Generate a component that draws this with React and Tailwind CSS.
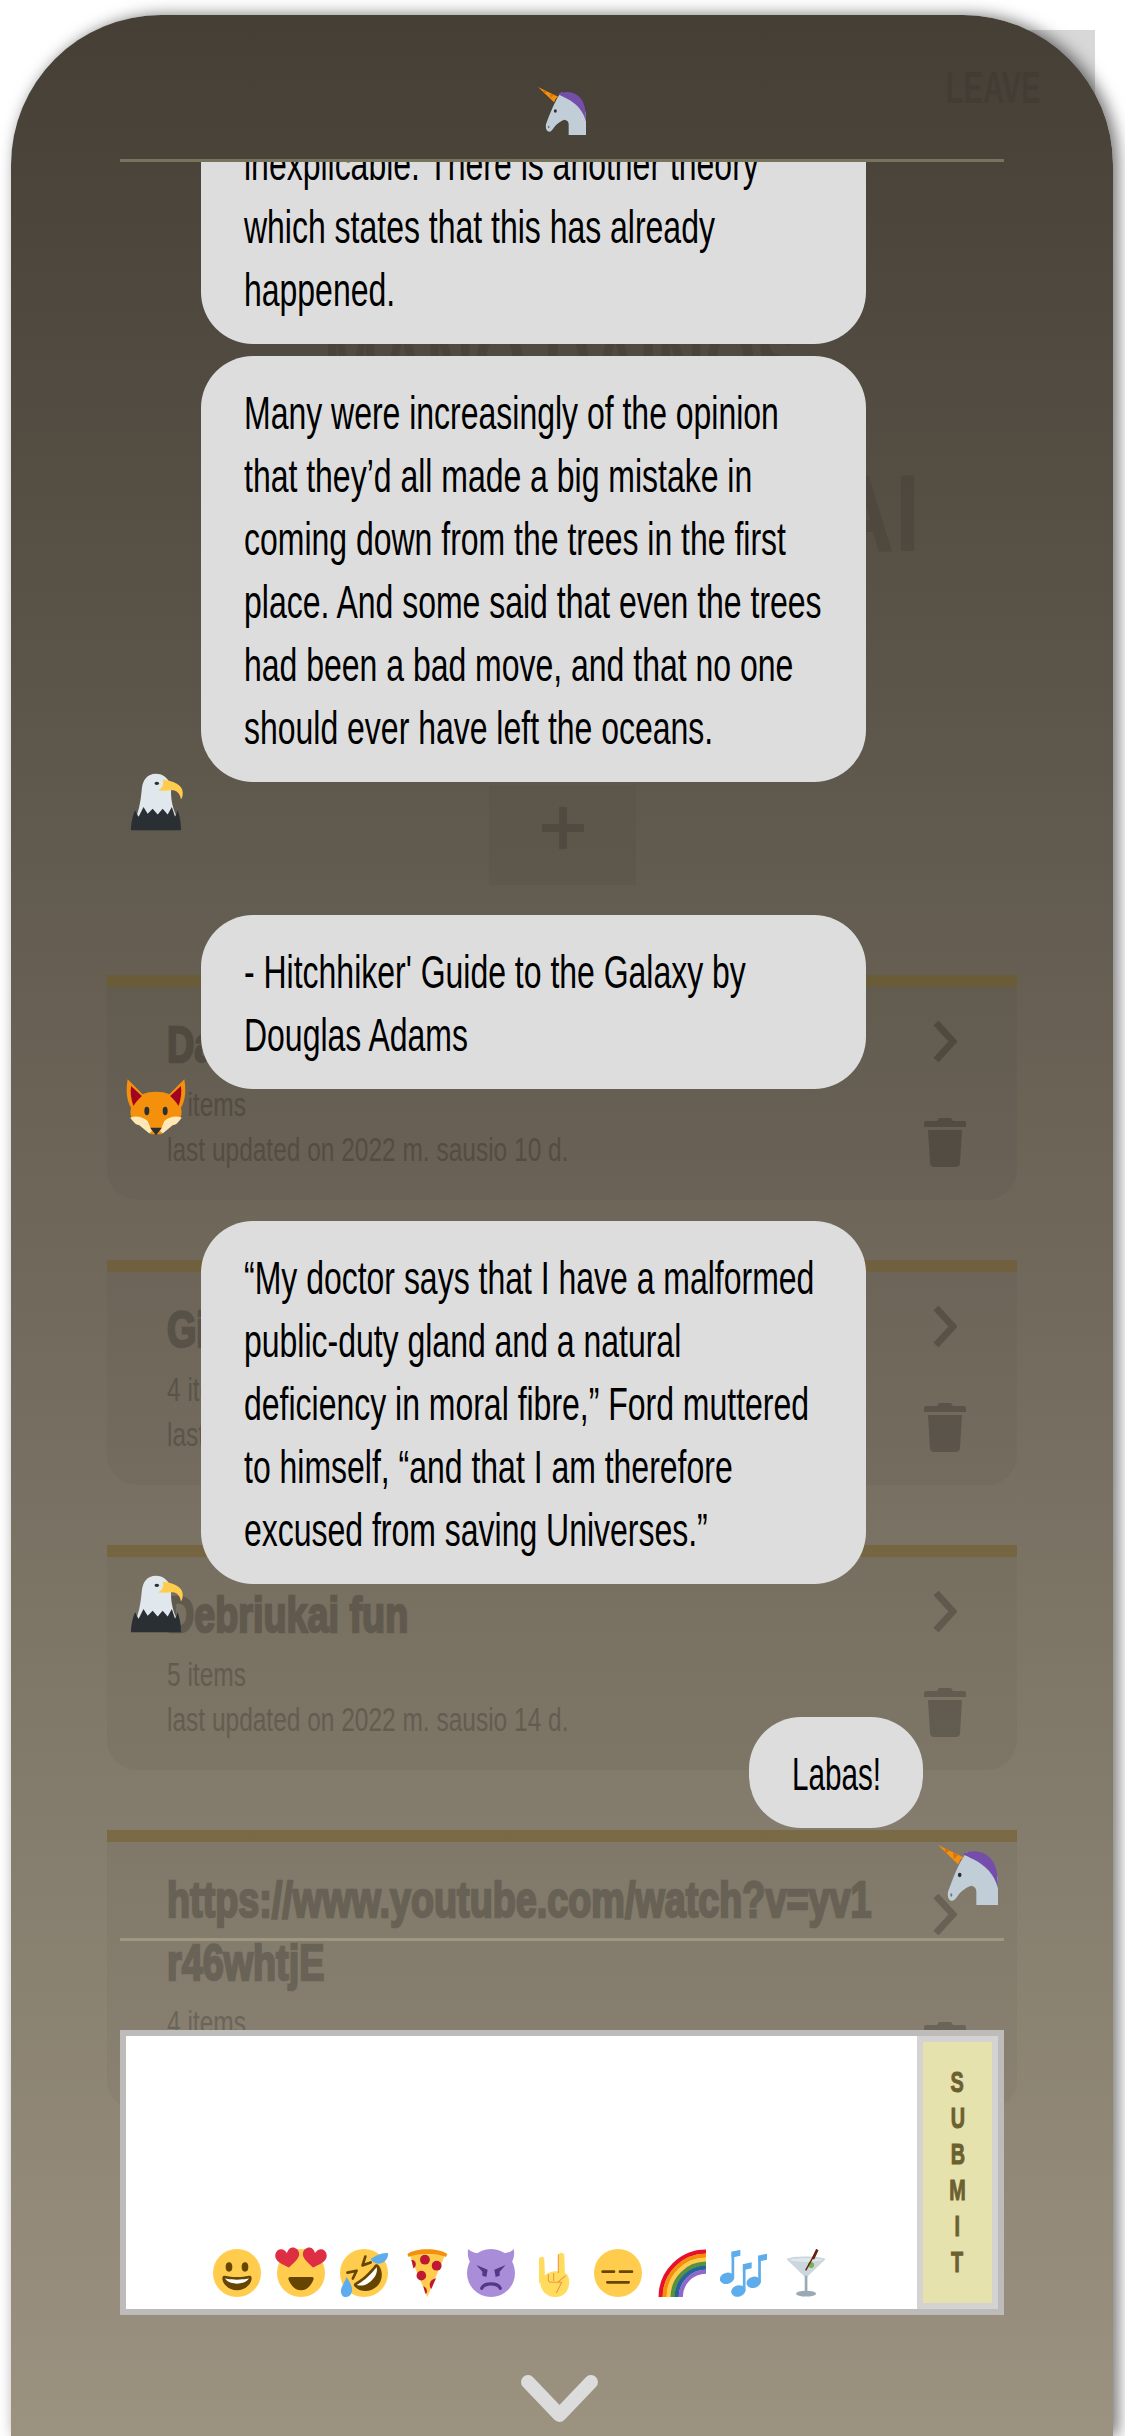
import React from "react";

const Bubble = ({ lines, className, lineClass = "scale-x-[.695]" }) => (
  <div className={`shrink-0 rounded-[52px] bg-[#dddddd] pb-[22px] pt-[26px] text-[46px] leading-[63px] text-black ${className}`}>
    {lines.map((l) => (
      <span key={l} className={`block origin-left whitespace-nowrap ${lineClass}`}>{l}</span>
    ))}
  </div>
);

const Unicorn = ({ className }) => (
  <svg viewBox="0 0 36 36" className={className}>
    <path d="M16 6 C12 12 9 20 6 28 C5.500 31 6.500 33.500 8.500 33.500 C10 33.500 11.500 31 13 29 C15 27 18 25 20 24.500 C22 25 23 26 23 28 V36 H36 V20 C34 12 27 6 20 6.500 L17.500 4 Z" fill="#C1CED7" />
    <path d="M15 5.500 C20 2.500 27 3.500 31 7.500 C35 11.500 36 17 36 26 C34.500 20 31.500 16 28 13 C24 9.500 19 7.500 15 5.500 Z" fill="#744EAA" />
    <path d="M0 0 L15.500 7.500 L13.500 8.500 L12 11.500 Z" fill="#F4900C" />
    <path d="M4 2 L7 3.500 L4.500 5 Z M9 4.500 L12 6 L9.500 8.500 Z" fill="#D9700A" />
    <ellipse cx="13" cy="18" rx="1.100" ry="1.300" fill="#292F33" />
    <ellipse cx="8" cy="30" rx=".6" ry="1" fill="#66757F" />
  </svg>
);

const Eagle = ({ className }) => (
  <svg viewBox="0 0 36 36" className={className}>
    <path d="M18 1 C12.500 1 10 5 9.500 10 C9 15 8.500 20 6.500 26 L14 31 H26 L30 26 C27.500 20 27 16 27 11 L26 6 C24.500 3 21.500 1 18 1 Z" fill="#E1E8ED" />
    <path d="M3 35 C3 31 4 26 5.500 23 L7.500 27 L10.500 21 L13 25 L16 22 L19 25.500 L22 22 L25 25.500 L27.500 21 L29.500 27 L31 23 C32.500 27 33 31 33 35 Z" fill="#292F33" />
    <path d="M22 4.500 C26 5 32 6.500 33.500 10 C34.500 12.500 34 15 33 16.500 C32.500 13.500 31 11.500 28.500 11 C25.500 10.800 22 11.500 19 11 C21.500 10 23 8 22 4.500 Z" fill="#FFCC4D" />
    <ellipse cx="18.500" cy="6.800" rx="1.400" ry="1" fill="#292F33" />
  </svg>
);

const Fox = ({ className }) => (
  <svg viewBox="0 0 36 36" className={className}>
    <path d="M1 2 L10 11 C12 10 15 9.500 18 9.500 C21 9.500 24 10 26 11 L35 2 C36 8 36 14 33 19 C34 23 33 27 28 29 L21 35 H15 L8 29 C3 27 2 23 3 19 C0 14 0 8 1 2 Z" fill="#F4900C" />
    <path d="M3 6 L9.500 12 C7.500 14 5.500 16 4.500 18 C3 14 2.500 10 3 6 Z M33 6 L26.500 12 C28.500 14 30.500 16 31.500 18 C33 14 33.500 10 33 6 Z" fill="#A0041E" />
    <path d="M2.500 25 C6 23.500 10 24.500 13 27 L15.500 33 L14 34.500 L8 29.500 L6 29 L4.500 27.500 Z M33.500 25 C30 23.500 26 24.500 23 27 L20.500 33 L22 34.500 L28 29.500 L30 29 L31.500 27.500 Z" fill="#FFE8B6" />
    <path d="M14.500 31 H21.500 L18 35.500 Z" fill="#292F33" />
    <ellipse cx="12.500" cy="21" rx="1.500" ry="2.500" fill="#292F33" />
    <ellipse cx="23.500" cy="21" rx="1.500" ry="2.500" fill="#292F33" />
  </svg>
);

const Grin = () => (
  <svg viewBox="0 0 36 36" className="h-12 w-12 shrink-0">
    <circle cx="18" cy="18" r="18" fill="#FFCC4D" />
    <path d="M18 21c-3.600 0-6-.4-9-1-.7-.1-2 0-2 2 0 4 4.600 9 11 9s11-5 11-9c0-2-1.300-2.100-2-2-3 .6-5.400 1-9 1z" fill="#664500" />
    <path d="M9 22s3 1 9 1 9-1 9-1-2 4-9 4-9-4-9-4z" fill="#fff" />
    <ellipse cx="12" cy="13.500" rx="2.500" ry="3.500" fill="#664500" />
    <ellipse cx="24" cy="13.500" rx="2.500" ry="3.500" fill="#664500" />
  </svg>
);

const heart = "M9 15 C5 12 0 9.500 0 5.500 C0 2.500 2.300 .5 4.500 .5 C6.500 .5 8 2 9 4 C10 2 11.500 .5 13.500 .5 C15.700 .5 18 2.500 18 5.500 C18 9.500 13 12 9 15 Z";

const HeartEyes = () => (
  <svg viewBox="0 0 36 36" className="h-12 w-12 shrink-0 overflow-visible">
    <circle cx="18" cy="18" r="18" fill="#FFCC4D" />
    <path d="M10 21 H26 C27 21 27.700 21.700 27.400 22.700 C26 27 22.500 31 18 31 S10 27 8.600 22.700 C8.300 21.700 9 21 10 21 Z" fill="#664500" />
    <g fill="#DD2E44">
      <path d={heart} transform="translate(-1 -1) rotate(-8 9 8)" />
      <path d={heart} transform="translate(19 -1) rotate(8 9 8)" />
    </g>
  </svg>
);

const Rofl = () => (
  <svg viewBox="0 0 36 36" className="h-12 w-12 shrink-0 overflow-visible">
    <circle cx="18" cy="18" r="18" fill="#FFCC4D" />
    <g transform="rotate(-42 18 18)">
      <path d="M18 20c-4 0-7-.4-10-1-.7-.1-2 0-2 2 0 5 5 11 12 11s12-6 12-11c0-2-1.300-2.100-2-2-3 .6-6 1-10 1z" fill="#664500" />
      <path d="M8 21s3 1 10 1 10-1 10-1-2 5-10 5-10-5-10-5z" fill="#fff" />
      <path d="M9 9.500 L15 13 L9 15.500 M27 9.500 L21 13 L27 15.500" fill="none" stroke="#664500" strokeWidth="2" strokeLinecap="round" strokeLinejoin="round" />
    </g>
    <path d="M36 3c.5 3-2 8-7 8-3 0-5-1.500-6-3.500C26 5.500 31 2.500 36 3z" fill="#5DADEC" />
    <path d="M4.500 36c-3 0-4.500-3-3.500-6.500C2 26.500 4 24 5 21c1.500 2.500 3.500 5.500 4 8.500.5 3.500-1.500 6.500-4.500 6.500z" fill="#5DADEC" />
  </svg>
);

const Pizza = () => (
  <svg viewBox="0 0 36 36" className="h-12 w-12 shrink-0">
    <path d="M4 4 H31 L17.500 36 Z" fill="#FFCC4D" />
    <path d="M2.500 4 C8 -1 27 -1 32.500 4 L31.500 6 C26 3 9 3 3.500 6 Z" fill="#F4900C" />
    <g fill="#BE1931">
      <circle cx="15.700" cy="8" r="3.700" />
      <circle cx="24.500" cy="12.500" r="3.700" />
      <path d="M5.500 8 C8.500 8 9.500 11 8.500 13 C7.500 14.500 7 14.500 7 14.500 Z" />
      <circle cx="13" cy="20" r="3.600" />
      <path d="M24 22 L20.500 30 C18.500 28 18.500 23 24 22 Z" />
      <path d="M14.500 28 C17 29 17.500 31 17 33 L16 33.500 Z" />
    </g>
  </svg>
);

const Imp = () => (
  <svg viewBox="0 0 36 36" className="h-12 w-12 shrink-0">
    <path d="M1 0 C0 4 1 8 3 11 L11 3 C7 3.500 3 2.500 1 0 Z M35 0 C36 4 35 8 33 11 L25 3 C29 3.500 33 2.500 35 0 Z" fill="#AA8DD8" />
    <circle cx="18" cy="18" r="18" fill="#AA8DD8" />
    <path d="M7 12 L15.500 15.500 L14.500 21 L11.500 20 L11.500 17 Z M29 12 L20.500 15.500 L21.500 21 L24.500 20 L24.500 17 Z" fill="#553788" />
    <path d="M11 29.500 C13 25 23 25 25 29.500" fill="none" stroke="#553788" strokeWidth="2.400" strokeLinecap="round" />
  </svg>
);

const Horns = () => (
  <svg viewBox="0 0 36 36" className="h-12 w-12 shrink-0">
    <g fill="#FFDC5D">
      <path d="M6 8 C6 5 10 5 10 8 L10.500 22 L6 26 Z" />
      <path d="M20.500 5 C20.500 2 25 2 25 5 L25.500 20 H20.500 Z" />
      <path d="M7 24 C7 22 10 20 13 18 C17 16 23 16 27 19 C29 22 29 26 28 29 C26.500 34 22 36 18 36 C11 36 6.500 30 7 24 Z" />
    </g>
    <path d="M20.500 4 V18 M13 19 V23 C13 24 14 25 15 25 H20 M17 18 V24 M26 20 L20 25 H23 L19 33" fill="none" stroke="#EF9645" strokeWidth=".8" />
  </svg>
);

const Flat = () => (
  <svg viewBox="0 0 36 36" className="h-12 w-12 shrink-0">
    <circle cx="18" cy="18" r="18" fill="#FFCC4D" />
    <path d="M6.500 17 H15 M19.500 17 H28.500 M10 25 H26" fill="none" stroke="#664500" strokeWidth="2" strokeLinecap="round" />
  </svg>
);

const Rainbow = () => (
  <svg viewBox="0 0 36 36" className="h-12 w-12 shrink-0">
    {[
      [34, "#E8112D"],
      [31, "#F4900C"],
      [28, "#FFCC4D"],
      [25, "#5C913B"],
      [22, "#226699"],
      [19, "#9266CC"],
    ].map(([r, c]) => (
      <path key={r} d={`M${36 - r} 36 A${r} ${r} 0 0 1 36 ${36 - r}`} fill="none" stroke={c} strokeWidth="3.200" />
    ))}
  </svg>
);

const Note = ({ x, y }) => (
  <g transform={`translate(${x} ${y})`} fill="#5DADEC">
    <ellipse cx="0" cy="0" rx="5.400" ry="4.200" transform="rotate(-15)" />
    <rect x="3.400" y="-20" width="2" height="20" />
    <path d="M3.400 -20 L10 -21.500 V-17 L3.400 -15.500 Z" />
  </g>
);

const Notes = () => (
  <svg viewBox="0 0 36 36" className="h-12 w-12 shrink-0 overflow-visible">
    <Note x={4.500} y={22} />
    <Note x={13} y={31.500} />
    <Note x={24.500} y={25} />
  </svg>
);

const Cocktail = () => (
  <svg viewBox="0 0 36 36" className="h-12 w-12 shrink-0">
    <path d="M1 7.500 C5 5 26 5 30.500 7.500 L16.500 21 H15 Z" fill="#CCD6DD" />
    <path d="M3 8 C8 6.500 24 6.500 28.500 8 C24 10 8 10 3 8 Z" fill="#E1E8ED" />
    <rect x="14.800" y="20" width="2" height="12.500" fill="#99AAB5" />
    <ellipse cx="15.800" cy="33.500" rx="7.500" ry="2.200" fill="#99AAB5" />
    <circle cx="19.500" cy="12" r="2.300" fill="#77B255" />
    <path d="M15.500 16 L24.200 .5" stroke="#662113" strokeWidth="1.100" />
    <path d="M21 7.500 L24.200 .5" stroke="#662113" strokeWidth="2" />
  </svg>
);

const Chevron = ({ className }) => (
  <svg viewBox="0 0 24 41" className={className} fill="none" stroke="currentColor" strokeWidth="7">
    <path d="M3 2 L20 20.500 L3 39" />
  </svg>
);

const Trash = ({ className }) => (
  <svg viewBox="0 0 42 49" className={className} fill="currentColor">
    <path d="M15 0 H27 L29 3 H40 C41 3 42 4 42 5 V9 H0 V5 C0 4 1 3 2 3 H13 Z" />
    <path d="M4 12 H38 L36 45 C36 47.500 34 49 32 49 H10 C8 49 6 47.500 6 45 Z" />
  </svg>
);

// faint list that sits behind the chat
const Card = ({ title, items, date, chevronClass = "mt-[34px]", trashClass = "mt-[56px]", className }) => (
  <div className={`flex justify-between rounded-b-[30px] border-t-[12px] border-[#735b21]/50 bg-black/[.03] pl-[60px] pr-[51px] ${className}`}>
    <div className="min-w-0 flex-1 pt-[27px]">
      <div className="text-[50px] font-bold leading-[63px] text-black opacity-20 [-webkit-text-stroke:2.5px_black]">
        {title.map((t) => (
          <span key={t} className="block origin-left scale-x-[.755] whitespace-nowrap">{t}</span>
        ))}
      </div>
      <div className="mt-[5px] text-[34px] leading-[45px] text-black opacity-20">
        <span className="block origin-left scale-x-[.72] whitespace-nowrap">{items}</span>
        <span className="block origin-left scale-x-[.72] whitespace-nowrap">{date}</span>
      </div>
    </div>
    <div className="flex w-[42px] shrink-0 flex-col items-center text-black opacity-20">
      <Chevron className={`h-[41px] w-[24px] ${chevronClass}`} />
      <Trash className={`h-[49px] w-[42px] ${trashClass}`} />
    </div>
  </div>
);

const App = () => {
  return (
    <div className="relative h-[2436px] w-[1125px] overflow-hidden bg-white font-['Liberation_Sans',sans-serif]">
      <div className="absolute left-[935px] top-[30px] h-[110px] w-[160px] bg-[#d8d8d8]" />

      <main className="relative ml-[11px] mt-[15px] h-[2421px] w-[1102px] rounded-t-[150px] bg-linear-to-b from-[#453f36] to-[#9b9280] shadow-[5px_0_16px_rgba(0,0,0,0.55)]">
        {/* page under the chat */}
        <div className="flex flex-col">
          <div className="flex h-[273px] justify-end pr-[73px] pt-[48px]">
            <span className="origin-right scale-x-[.66] text-[44px] font-bold leading-[50px] text-black opacity-[.06]">LEAVE</span>
          </div>
          <div className="text-center text-[110px] font-bold leading-[150px] text-black opacity-[.08]">
            <span className="block scale-x-[.6] whitespace-nowrap">MANO DAINOS</span>
            <span className="block scale-x-[.85] whitespace-nowrap">GROJARASCIAI</span>
          </div>
          <div className="ml-[478px] mt-[197px] flex h-[100px] w-[147px] items-start justify-center bg-black/[.03] pt-[22px]">
            <svg viewBox="0 0 42 42" className="h-[42px] w-[42px] text-black opacity-[.13]" fill="currentColor">
              <path d="M17 0 H25 V17 H42 V25 H25 V42 H17 V25 H0 V17 H17 Z" />
            </svg>
          </div>
          <div className="ml-[96px] mt-[90px] flex w-[910px] flex-col gap-[60px]">
            <Card className="h-[225px]" title={["Dainos"]} items="6 items" date="last updated on 2022 m. sausio 10 d." />
            <Card className="h-[225px]" title={["Gitara"]} items="4 items" date="last updated on 2022 m. sausio 12 d." />
            <Card className="h-[225px]" title={["Debriukai fun"]} items="5 items" date="last updated on 2022 m. sausio 14 d." />
            <Card
              className="h-[280px]"
              title={["https://www.youtube.com/watch?v=yv1", "r46whtjE"]}
              items="4 items"
              date="last updated on 2022 m. sausio 14 d."
              chevronClass="mt-[52px]"
              trashClass="mt-[87px]"
            />
          </div>
        </div>

        {/* chat overlay */}
        <div className="absolute inset-0 flex flex-col px-[109px]">
          <div className="flex h-[147px] items-start justify-center border-b-[3px] border-[#77735c] pt-[72px]">
            <Unicorn className="h-12 w-12" />
          </div>
          <div className="flex h-[1779px] flex-col justify-end overflow-hidden border-b-[3px] border-[#a0977f] pb-[33px]">
            <Bubble
              className="ml-[81px] w-[665px] px-[43px]"
              lines={[
                "inexplicable. There is another theory",
                "which states that this has already",
                "happened.",
              ]}
            />
            <Bubble
              className="ml-[81px] mt-[12px] w-[665px] px-[43px]"
              lines={[
                "Many were increasingly of the opinion",
                "that they’d all made a big mistake in",
                "coming down from the trees in the first",
                "place. And some said that even the trees",
                "had been a bad move, and that no one",
                "should ever have left the oceans.",
              ]}
            />
            <Eagle className="ml-[6px] -mt-[10px] mb-[83px] h-[60px] w-[60px] shrink-0" />
            <Bubble
              className="ml-[81px] w-[665px] px-[43px]"
              lines={["- Hitchhiker' Guide to the Galaxy by", "Douglas Adams"]}
            />
            <Fox className="ml-[6px] -mt-[13px] mb-[85px] h-[60px] w-[60px] shrink-0" />
            <Bubble
              className="ml-[81px] w-[665px] px-[43px]"
              lines={[
                "“My doctor says that I have a malformed",
                "public-duty gland and a natural",
                "deficiency in moral fibre,” Ford muttered",
                "to himself, “and that I am therefore",
                "excused from saving Universes.”",
              ]}
            />
            <Eagle className="ml-[6px] -mt-[10px] mb-[83px] h-[60px] w-[60px] shrink-0" />
            <Bubble className="ml-[629px] w-[174px] px-[43px]" lineClass="scale-x-[.645]" lines={["Labas!"]} />
            <Unicorn className="ml-[818px] mt-[17px] h-[60px] w-[60px] shrink-0" />
          </div>

          <form className="mt-[89px] flex h-[285px] shrink-0 border-[6px] border-[#bdbcbb] bg-white">
            <div className="flex flex-1 items-end gap-[15.5px] pb-[12px] pl-[87px]">
              <Grin />
              <HeartEyes />
              <Rofl />
              <Pizza />
              <Imp />
              <Horns />
              <Flat />
              <Rainbow />
              <Notes />
              <Cocktail />
            </div>
            <button type="button" className="flex w-[81px] flex-col items-center border-[6px] border-[#d4d3d2] bg-[#e6e2ad] pt-[22px] text-[30px] font-bold leading-[36px] text-[#6b6030] [-webkit-text-stroke:1px_#6b6030]">
              {["S", "U", "B", "M", "I", "T"].map((c) => (
                <span key={c} className="scale-x-[.66]">{c}</span>
              ))}
            </button>
          </form>

          <div className="flex justify-center pr-[6px] pt-[60px]">
            <svg viewBox="0 0 77 47" className="h-[47px] w-[77px]" fill="none" stroke="#dcdcdc" strokeWidth="14" strokeLinecap="round" strokeLinejoin="round">
              <path d="M7 7 L38.500 40 L70 7" />
            </svg>
          </div>
        </div>
      </main>
    </div>
  );
};

export default App;
